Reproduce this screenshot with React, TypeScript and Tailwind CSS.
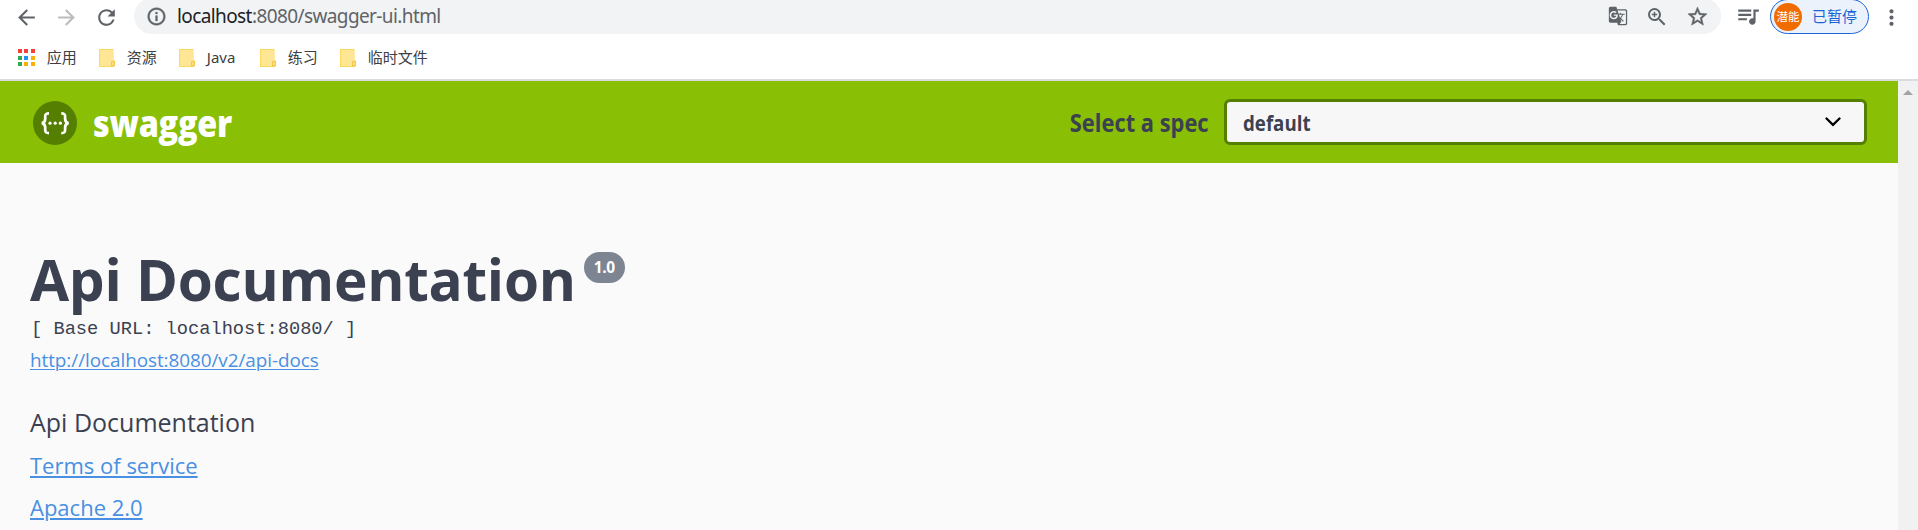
import React from "react";
import {
  MdArrowBack,
  MdArrowForward,
  MdRefresh,
  MdInfoOutline,
  MdGTranslate,
  MdZoomIn,
  MdStarBorder,
  MdQueueMusic,
  MdMoreVert,
} from "react-icons/md";

const appDots = [
  "bg-[#f44336]", "bg-[#f44336]", "bg-[#f44336]",
  "bg-[#34a853]", "bg-[#2196f3]", "bg-[#fbb005]",
  "bg-[#34a853]", "bg-[#fbb005]", "bg-[#fbb005]",
];

function Folder() {
  return (
    <svg className="h-[18px] w-4 shrink-0" viewBox="0 0 16 18">
      <path d="M0 0h14.5v11.5H16V17l-1 1H0z" fill="#fbd95f" />
      <path d="M1 1h13v10.5l-1.5 1V17H1z" fill="#ffe694" />
      <path d="M12.6 17.2v-4.6h2.6v4.2z" fill="#ffe28a" stroke="#eebf3a" strokeWidth=".8" />
    </svg>
  );
}

function Bookmark({ label, className }: { label: string; className: string }) {
  return (
    <div className={"flex shrink-0 items-center gap-3 " + className}>
      <Folder />
      <span className="whitespace-nowrap">{label}</span>
    </div>
  );
}

function BrowserBar() {
  return (
    <div className="h-[81px] shrink-0 overflow-hidden border-b-2 border-[#dadce0] bg-white font-['Noto_Sans','Noto_Sans_CJK_SC',sans-serif]">
      <div className="flex h-[34px] items-center pl-[14px] text-[#5f6368]">
        <MdArrowBack className="mr-[15px] size-[25px] shrink-0" />
        <MdArrowForward className="mr-[15px] size-[25px] shrink-0 text-[#babcbe]" />
        <MdRefresh className="mr-[15px] size-[25px] shrink-0" />
        <div className="-mt-0.5 flex h-9 w-[1587px] shrink-0 items-center rounded-full bg-[#f1f3f4] pl-3 pr-3">
          <MdInfoOutline className="mr-[10px] size-[21px] shrink-0 [&>path:last-child]:stroke-current [&>path:last-child]:stroke-[0.5]" />
          <span className="grow whitespace-nowrap pt-px text-[19px] tracking-[-0.6px] text-[#202124]">
            localhost<span className="text-[#5f6368]">:8080/swagger-ui.html</span>
          </span>
          <div className="flex items-center gap-[17px]">
            <MdGTranslate className="size-[20px]" />
            <MdZoomIn className="mt-px size-[24px] [&>path:last-child]:stroke-current [&>path:last-child]:stroke-[0.5]" />
            <MdStarBorder className="size-[23px] [&>path:last-child]:stroke-current [&>path:last-child]:stroke-[0.5]" />
          </div>
        </div>
        <MdQueueMusic className="-mt-[3px] ml-[14px] size-[26px] shrink-0" />
        <div className="-mt-px ml-[9px] flex h-[35px] w-[99px] shrink-0 items-center rounded-full border border-[#1a66d6] bg-[#ecf2fc] pl-[3px] text-[15px] text-[#1a66d6]">
          <span className="mr-[10px] flex size-7 items-center justify-center rounded-full bg-[#f06c00] text-[11.5px] leading-none text-white">
            潜能
          </span>
          <span className="whitespace-nowrap">已暂停</span>
        </div>
        <MdMoreVert className="ml-[10px] size-[25px] shrink-0" />
      </div>
      <div className="flex h-[47px] items-center pl-[18px] text-[15px] leading-none text-[#3c4043]">
        <div className="grid shrink-0 grid-cols-3 gap-[2.4px]">
          {appDots.map((c, i) => (
            <span key={i} className={"size-[4px] " + c} />
          ))}
        </div>
        <span className="ml-3 w-[52px] shrink-0 whitespace-nowrap">应用</span>
        <Bookmark label="资源" className="w-20" />
        <Bookmark label="Java" className="w-[81px]" />
        <Bookmark label="练习" className="w-20" />
        <Bookmark label="临时文件" className="" />
      </div>
    </div>
  );
}

function Topbar() {
  return (
    <div className="flex h-[82px] shrink-0 items-center bg-[#89bf04] pl-[33px] pr-[31px] font-['Open_Sans',sans-serif]">
      <svg className="mt-px size-11 shrink-0" viewBox="0 0 44 44">
        <circle cx="22" cy="22" r="22" fill="#547f00" />
        <g fill="none" stroke="#fff" strokeWidth="2.7">
          <path d="M16 12.3c-3 0-3.8.8-3.8 3.3v2.2c0 2.8-.7 4-3.5 4.4 2.8.4 3.5 1.6 3.5 4.4v2.2c0 2.5.8 3.3 3.8 3.3" />
          <path d="M28.3 12.3c3 0 3.8.8 3.8 3.3v2.2c0 2.8.7 4 3.5 4.4-2.8.4-3.5 1.6-3.5 4.4v2.2c0 2.5-.8 3.3-3.8 3.3" />
        </g>
        <circle cx="17" cy="22.2" r="1.6" fill="#fff" />
        <circle cx="22.2" cy="22.2" r="1.6" fill="#fff" />
        <circle cx="27.4" cy="22.2" r="1.6" fill="#fff" />
      </svg>
      <span className="ml-4 origin-left scale-x-[0.875] whitespace-nowrap text-[37px] font-extrabold leading-none tracking-[-0.3px] text-white">
        swagger
      </span>
      <span className="ml-auto mr-[15px] origin-right scale-x-[0.875] whitespace-nowrap text-[25px] font-bold leading-none text-[#3b4151]">
        Select a spec
      </span>
      <div className="flex h-[46px] w-[643px] items-center justify-between rounded-md border-3 border-[#547f00] bg-[#f7f7f7] pl-4 pr-[23px]">
        <span className="origin-left scale-x-[0.85] text-[22px] font-bold leading-none text-[#3b4151]">default</span>
        <svg className="h-[10px] w-4" viewBox="0 0 16 10">
          <path d="M1.5 1.5 8 7.8l6.5-6.3" fill="none" stroke="#000" strokeWidth="2.3" strokeLinecap="round" />
        </svg>
      </div>
    </div>
  );
}

function Info() {
  return (
    <div className="flex grow flex-col items-start pl-[30px] pt-[89px] font-['Open_Sans',sans-serif] text-[#3b4151]">
      <div className="flex h-[62px] items-start">
        <h1 className="-mt-0.5 whitespace-nowrap text-[56.7px] font-bold leading-[58px] tracking-[-0.25px]">
          Api Documentation
        </h1>
        <span className="ml-[8px] flex h-[31px] w-[41px] items-center justify-center rounded-full bg-[#7d8492] pt-px text-[15.5px] font-bold leading-none tracking-[-0.4px] text-white">
          1.0
        </span>
      </div>
      <pre className="ml-px h-8 pt-px font-['Liberation_Mono',monospace] text-[18.7px] leading-[29px]">
        [ Base URL: localhost:8080/ ]
      </pre>
      <a className="mb-[28px] h-7 whitespace-nowrap text-[18.9px] leading-[28px] tracking-[-0.06px] text-[#4990e2] underline decoration-1 underline-offset-2">
        http://localhost:8080/v2/api-docs
      </a>
      <p className="h-[42px] whitespace-nowrap text-[25px] leading-[41px]">Api Documentation</p>
      <a className="h-[42px] whitespace-nowrap text-[22px] leading-[42px] text-[#4990e2] underline decoration-2 underline-offset-2">
        Terms of service
      </a>
      <a className="h-[42px] whitespace-nowrap text-[22px] leading-[42px] text-[#4990e2] underline decoration-2 underline-offset-2">
        Apache 2.0
      </a>
    </div>
  );
}

export default function App() {
  return (
    <div className="flex h-[530px] w-[1918px] flex-col overflow-hidden">
      <BrowserBar />
      <div className="flex min-h-0 grow">
        <div className="flex w-[1898px] flex-col overflow-hidden bg-[#fafafa]">
          <Topbar />
          <Info />
        </div>
        <div className="flex w-5 justify-center bg-[#f1f1f1] pt-[9px]">
          <svg className="h-[5px] w-[10px]" viewBox="0 0 10 5">
            <path d="M0 5 5 0l5 5z" fill="#a3a3a3" />
          </svg>
        </div>
      </div>
    </div>
  );
}
